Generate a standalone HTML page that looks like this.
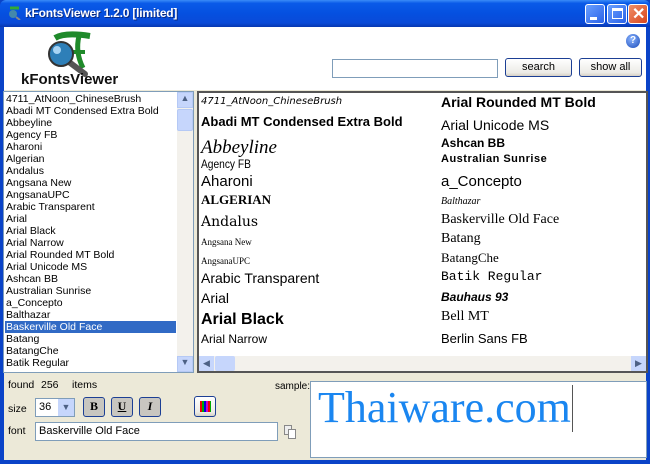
<!DOCTYPE html>
<html><head><meta charset="utf-8"><style>
*{margin:0;padding:0;box-sizing:border-box}
body{width:650px;height:464px;position:relative;overflow:hidden;font-family:"Liberation Sans",sans-serif;background:#0a43c8}
.a{position:absolute;white-space:nowrap}
#tb{left:0;top:0;width:650px;height:27px;background:linear-gradient(#3a8cf8 0,#0a5ae8 12%,#0550e0 50%,#0a4ad8 85%,#0838b0 100%);border-radius:6px 6px 0 0}
#tb .t{left:25px;top:6px;color:#fff;font-weight:bold;font-size:12px;letter-spacing:-0.2px;text-shadow:1px 1px #0a2a80}
.wb{top:4px;width:20px;height:20px;border:1px solid #fff;border-radius:3px;background:linear-gradient(135deg,#6aa0ff,#2a62e8)}
#client{left:4px;top:27px;width:642px;height:433px;background:#ece9d8}
#top{left:4px;top:27px;width:642px;height:63px;background:#fff}
.lb{font-size:10.5px;line-height:12px}
.btn{border:1px solid #1c3f94;border-radius:3px;background:linear-gradient(#fff,#ecebe6 80%,#d6d0c5);font-size:11px;text-align:center;line-height:17px}
.p{position:absolute;white-space:nowrap;color:#000}
</style></head><body>
<div id="tb" class="a">
 <div class="a" style="left:7px;top:6px;width:14px;height:14px;"><svg width="14" height="14"><path d="M3 2h9" stroke="#3a3" stroke-width="3"/><circle cx="6" cy="8" r="4" fill="#48a"/><path d="M9 11l4 3" stroke="#888" stroke-width="2"/></svg></div>
 <div class="a t">kFontsViewer 1.2.0 [limited]</div>
 <div class="a wb" style="left:585px"><div class="a" style="left:4px;top:12px;width:7px;height:3px;background:#fff"></div></div>
 <div class="a wb" style="left:607px"><div class="a" style="left:4px;top:3px;width:11px;height:11px;border:1px solid #fff;border-top-width:3px"></div></div>
 <div class="a wb" style="left:628px;background:linear-gradient(135deg,#f0906a,#d8451c)"><div class="a" style="left:3px;top:-1px;color:#fff;font-size:16px;font-weight:bold">✕</div></div>
</div>
<div id="client" class="a"></div>
<div id="top" class="a"></div>
<svg class="a" style="left:35px;top:30px" width="70" height="48">
 <path d="M20 8 Q30 2 55 6" stroke="#1f8a2a" stroke-width="6" fill="none"/>
 <path d="M44 6 Q40 22 48 38" stroke="#1f8a2a" stroke-width="5" fill="none"/>
 <path d="M38 22 h12" stroke="#1f8a2a" stroke-width="4"/>
 <path d="M34 32 L50 44" stroke="#555" stroke-width="6" stroke-linecap="round"/>
 <circle cx="26" cy="24" r="12" fill="#2e7fb8" stroke="#333" stroke-width="2"/>
 <circle cx="22" cy="20" r="4" fill="#a8d4f4"/>
</svg>
<div class="a" style="left:21px;top:71px;font-weight:bold;font-size:15px;color:#111">kFontsViewer</div>
<div class="a" style="left:626px;top:34px;width:14px;height:14px;border-radius:50%;background:radial-gradient(circle at 40% 35%,#8ab4ff,#1a4ab8);color:#fff;font-size:10px;font-weight:bold;text-align:center;line-height:14px">?</div>
<div class="a" style="left:332px;top:59px;width:166px;height:19px;border:1px solid #7f9db9;background:#fff"></div>
<div class="a btn" style="left:505px;top:58px;width:67px;height:19px">search</div>
<div class="a btn" style="left:579px;top:58px;width:63px;height:19px">show all</div>
<div class="a" style="left:3px;top:91px;width:191px;height:282px;border:1px solid #7f9db9;background:#fff"></div>
<div class="a lb" style="left:6px;top:93px">
<div>4711_AtNoon_ChineseBrush</div><div>Abadi MT Condensed Extra Bold</div><div>Abbeyline</div><div>Agency FB</div><div>Aharoni</div><div>Algerian</div><div>Andalus</div><div>Angsana New</div><div>AngsanaUPC</div><div>Arabic Transparent</div><div>Arial</div><div>Arial Black</div><div>Arial Narrow</div><div>Arial Rounded MT Bold</div><div>Arial Unicode MS</div><div>Ashcan BB</div><div>Australian Sunrise</div><div>a_Concepto</div><div>Balthazar</div>
<div style="background:#316ac5;color:#fff;width:171px;margin-left:-1px;padding-left:1px">Baskerville Old Face</div><div>Batang</div><div>BatangChe</div><div>Batik Regular</div></div>
<div class="a" style="left:177px;top:92px;width:16px;height:280px;background:#f3f1ec"></div>
<div class="a" style="left:177px;top:92px;width:16px;height:16px;background:#c6d6fc;border:1px solid #b5c9f5;font-size:9px;text-align:center;color:#4d6185">▲</div>
<div class="a" style="left:177px;top:109px;width:16px;height:22px;background:#c6d6fc;border:1px solid #b5c9f5;border-radius:2px"></div>
<div class="a" style="left:177px;top:356px;width:16px;height:16px;background:#c6d6fc;border:1px solid #b5c9f5;font-size:9px;text-align:center;color:#4d6185">▼</div>
<div class="a" style="left:197px;top:91px;width:451px;height:282px;border:2px solid #555;background:#fff"></div>
<div class="a" style="left:199px;top:356px;width:447px;height:15px;background:#f3f1ec"></div>
<div class="a" style="left:199px;top:356px;width:15px;height:15px;background:#c6d6fc;font-size:9px;text-align:center;color:#4d6185;line-height:15px">◀</div>
<div class="a" style="left:215px;top:356px;width:20px;height:15px;background:#c6d6fc;border-radius:2px"></div>
<div class="a" style="left:631px;top:356px;width:15px;height:15px;background:#c6d6fc;font-size:9px;text-align:center;color:#4d6185;line-height:15px">▶</div>
<div class="p" style="left:201px;top:96px;font-size:10px;font-style:italic;font-family:'DejaVu Sans'">4711_AtNoon_ChineseBrush</div>
<div class="p" style="left:201px;top:114px;font-size:13px;font-weight:bold;font-family:'Liberation Sans Narrow','Liberation Sans'">Abadi MT Condensed Extra Bold</div>
<div class="p" style="left:201px;top:137px;font-size:19px;font-style:italic;font-family:'Liberation Serif'">Abbeyline</div>
<div class="p" style="left:201px;top:157px;font-size:12px;font-family:'Liberation Sans Narrow','Liberation Sans';transform:scaleX(.85);transform-origin:left">Agency FB</div>
<div class="p" style="left:201px;top:173px;font-size:15px">Aharoni</div>
<div class="p" style="left:201px;top:192px;font-size:13px;font-weight:bold;font-family:'Liberation Serif'">ALGERIAN</div>
<div class="p" style="left:201px;top:214px;font-size:14px;font-family:'DejaVu Serif'">Andalus</div>
<div class="p" style="left:201px;top:237px;font-size:9px;font-family:'Liberation Serif'">Angsana New</div>
<div class="p" style="left:201px;top:256px;font-size:9px;font-family:'Liberation Serif'">AngsanaUPC</div>
<div class="p" style="left:201px;top:270px;font-size:14px">Arabic Transparent</div>
<div class="p" style="left:201px;top:290px;font-size:14px">Arial</div>
<div class="p" style="left:201px;top:311px;font-size:16px;font-weight:bold">Arial Black</div>
<div class="p" style="left:201px;top:332px;font-size:12px">Arial Narrow</div>
<div class="p" style="left:441px;top:94px;font-size:14px;font-weight:bold">Arial Rounded MT Bold</div>
<div class="p" style="left:441px;top:117px;font-size:14px">Arial Unicode MS</div>
<div class="p" style="left:441px;top:136px;font-size:12px;font-weight:bold">Ashcan BB</div>
<div class="p" style="left:441px;top:153px;font-size:11px;font-weight:bold;letter-spacing:.5px">Australian Sunrise</div>
<div class="p" style="left:441px;top:173px;font-size:15px">a_Concepto</div>
<div class="p" style="left:441px;top:196px;font-size:10px;font-style:italic;font-family:'Liberation Serif'">Balthazar</div>
<div class="p" style="left:441px;top:212px;font-size:14px;font-family:'Liberation Serif'">Baskerville Old Face</div>
<div class="p" style="left:441px;top:231px;font-size:14px;font-family:'Liberation Serif'">Batang</div>
<div class="p" style="left:441px;top:250px;font-size:13px;font-family:'Liberation Serif'">BatangChe</div>
<div class="p" style="left:441px;top:269px;font-size:13px;font-family:'Liberation Mono'">Batik Regular</div>
<div class="p" style="left:441px;top:290px;font-size:12px;font-weight:bold;font-style:italic">Bauhaus 93</div>
<div class="p" style="left:441px;top:309px;font-size:14px;font-family:'Liberation Serif'">Bell MT</div>
<div class="p" style="left:441px;top:331px;font-size:13px">Berlin Sans FB</div>
<div class="a lb" style="left:8px;top:379px">found</div>
<div class="a lb" style="left:41px;top:379px">256</div>
<div class="a lb" style="left:72px;top:379px">items</div>
<div class="a lb" style="left:275px;top:381px;font-size:10px">sample:</div>
<div class="a lb" style="left:8px;top:403px">size</div>
<div class="a" style="left:35px;top:398px;width:40px;height:19px;border:1px solid #7f9db9;background:#fff;font-size:11px;padding:2px 3px">36</div>
<div class="a" style="left:58px;top:399px;width:16px;height:17px;background:#c6d6fc;font-size:9px;color:#4d6185;text-align:center;line-height:17px">▼</div>
<div class="a btn" style="left:83px;top:397px;width:22px;height:20px;background:#c8c6c0;font-weight:bold;font-family:'Liberation Serif';font-size:12px">B</div>
<div class="a btn" style="left:111px;top:397px;width:22px;height:20px;background:#c8c6c0;font-weight:bold;text-decoration:underline;font-family:'Liberation Serif';font-size:12px">U</div>
<div class="a btn" style="left:139px;top:397px;width:22px;height:20px;background:#c8c6c0;font-weight:bold;font-style:italic;font-family:'Liberation Serif';font-size:12px">I</div>
<div class="a btn" style="left:194px;top:396px;width:22px;height:21px"><div class="a" style="left:5px;top:4px;width:11px;height:11px;background:repeating-linear-gradient(90deg,#e00 0 2px,#0a0 2px 4px,#00d 4px 6px,#c0c 6px 8px)"></div></div>
<div class="a lb" style="left:8px;top:425px">font</div>
<div class="a" style="left:35px;top:422px;width:243px;height:19px;border:1px solid #7f9db9;background:#fff;font-size:11px;padding:2px 3px">Baskerville Old Face</div>
<div class="a" style="left:284px;top:425px;width:8px;height:10px;border:1px solid #888;background:#eee"></div>
<div class="a" style="left:288px;top:429px;width:8px;height:10px;border:1px solid #888;background:#fff"></div>
<div class="a" style="left:310px;top:381px;width:337px;height:77px;border:1px solid #7f9db9;background:#fff"></div>
<div class="a" style="left:318px;top:382px;font-family:'Liberation Serif';font-size:44px;color:#1a86f0;line-height:52px">Thaiware.com</div>
<div class="a" style="left:572px;top:385px;width:1px;height:47px;background:#555"></div>
</body></html>
